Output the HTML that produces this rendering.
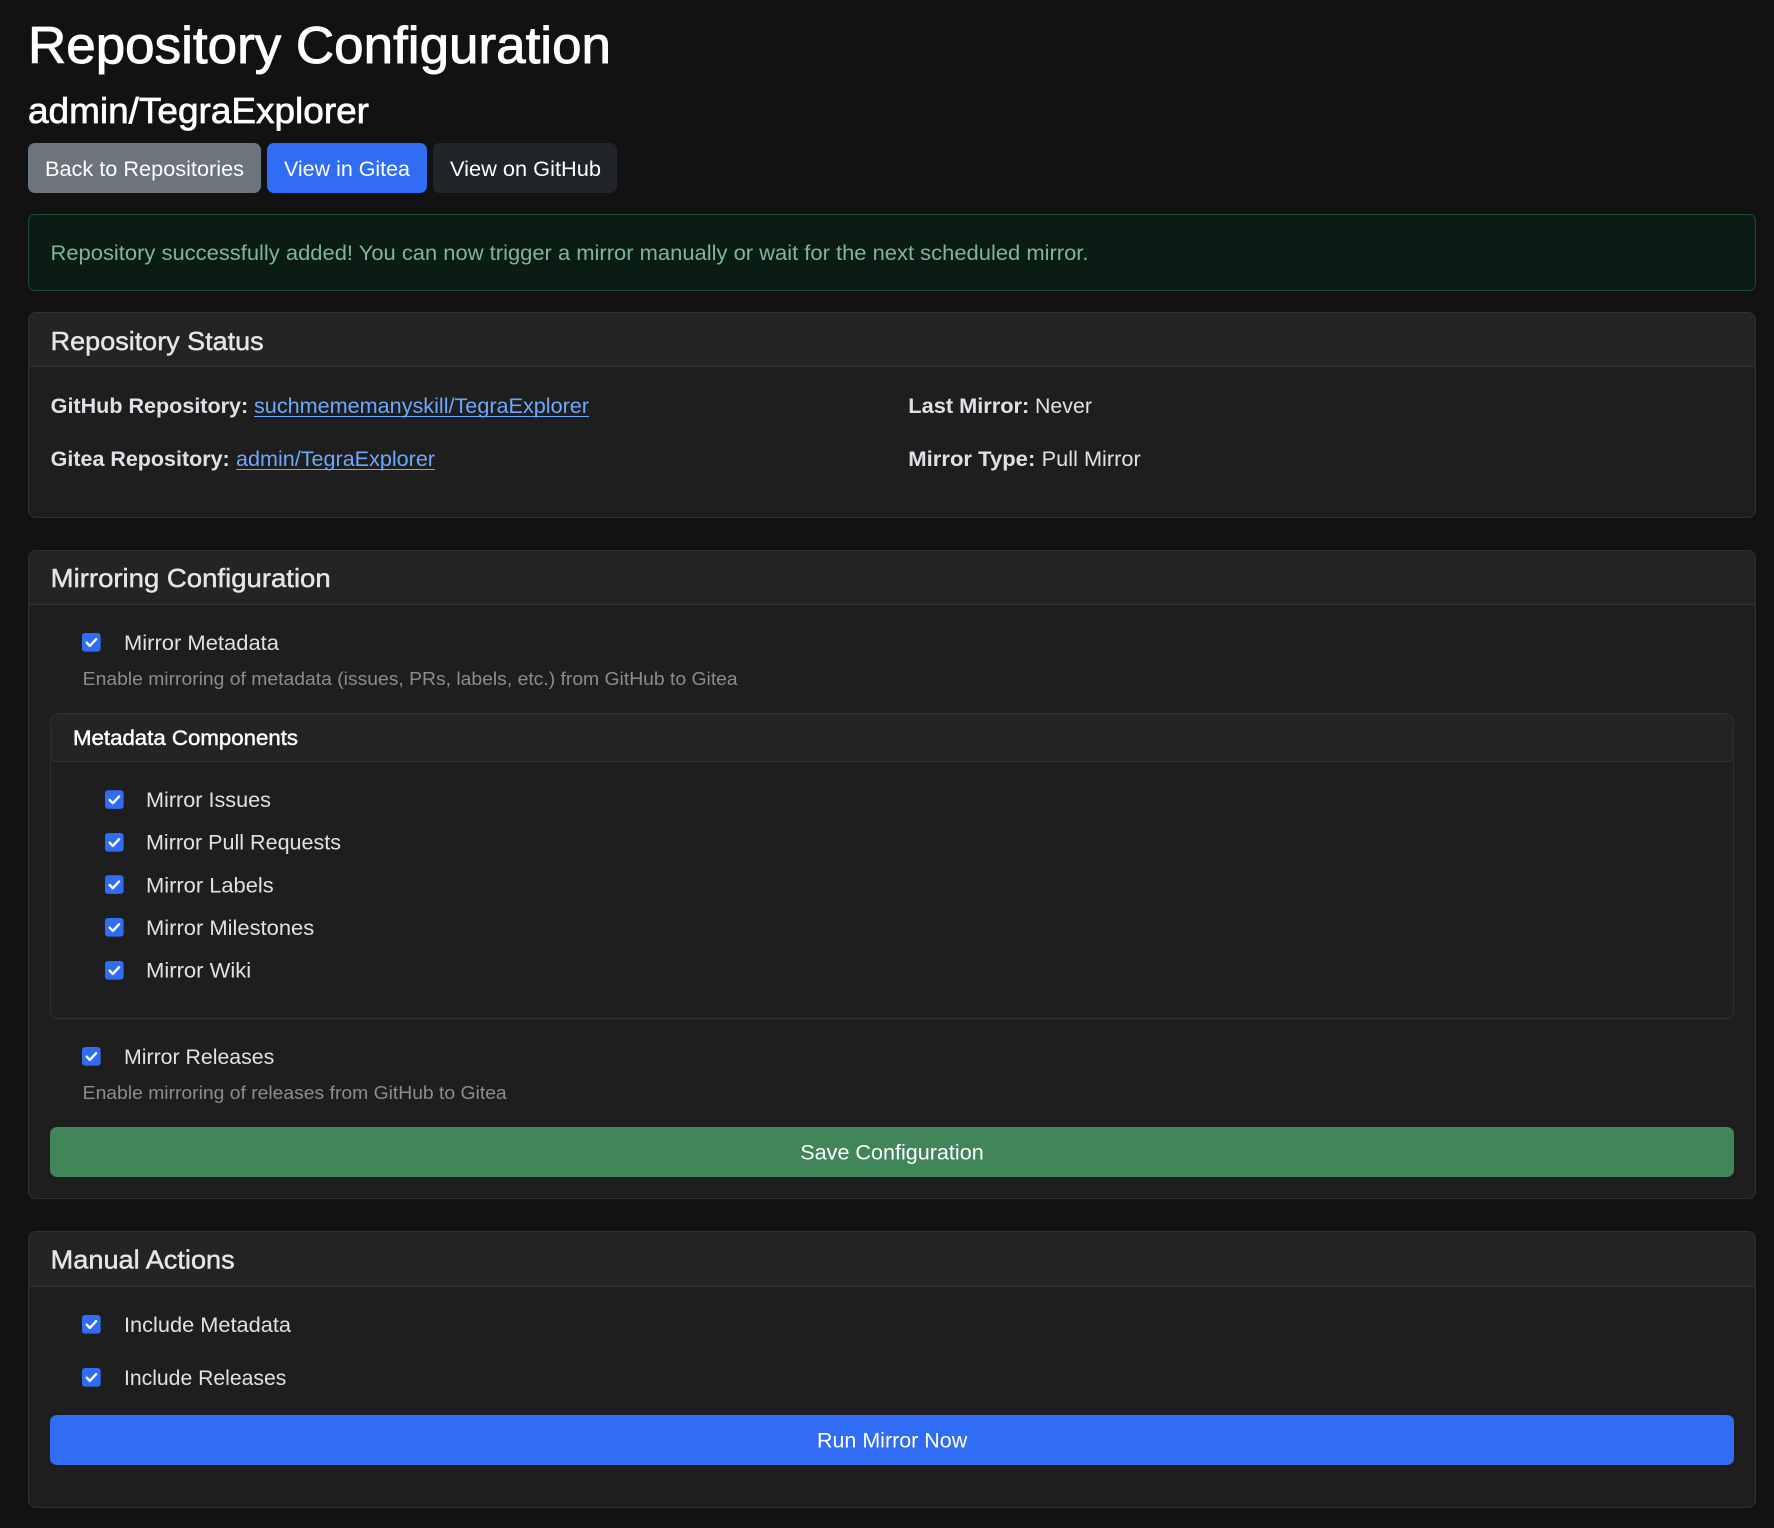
<!DOCTYPE html>
<html lang="en"><head><meta charset="utf-8"><title>Repository Configuration</title>
<style>
html,body{margin:0;padding:0;background:#121212;width:1774px;height:1528px;overflow:hidden}
body{position:relative;font-family:"Liberation Sans",sans-serif}
.b{position:absolute;box-sizing:border-box}
.card{background:#1e1e1e;border:1px solid #2f3133;border-radius:8px;left:28px;width:1728px;overflow:hidden}
.hd{position:absolute;box-sizing:border-box;left:0;top:0;right:0;background:#222524;border-bottom:1px solid #2f3133}
.btn{border-radius:7px;height:50px;top:143px}
svg{position:absolute;left:0;top:0}
text{font-family:"Liberation Sans",sans-serif;font-size:21px;fill:#dee2e6;white-space:pre}
.t{stroke-width:.2px;stroke:#dee2e6}
.m{stroke-width:.45px}
</style></head><body>
<div class="b btn" style="left:28px;width:233px;background:#6c757d"></div>
<div class="b btn" style="left:267px;width:160px;background:#316cf4"></div>
<div class="b btn" style="left:433px;width:184px;background:#212529"></div>
<div class="b" style="left:28px;top:214px;width:1728px;height:77px;background:#0a1c13;border:1px solid #1c4a2e;border-radius:7px"></div>
<div class="b card" style="top:312px;height:206px"><div class="hd" style="height:54px"></div></div>
<div class="b card" style="top:550px;height:649px"><div class="hd" style="height:54px"></div></div>
<div class="b card" style="top:713px;left:50px;width:1684px;height:306px"><div class="hd" style="height:48px"></div></div>
<div class="b" style="left:50px;top:1127px;width:1684px;height:50px;border-radius:7px;background:#41855a"></div>
<div class="b card" style="top:1231px;height:277px"><div class="hd" style="height:55px"></div></div>
<div class="b" style="left:50px;top:1415px;width:1684px;height:50px;border-radius:7px;background:#316cf4"></div>
<div class="b" style="left:254px;top:416px;width:335px;height:1px;background:#6ea8fe"></div>
<div class="b" style="left:236px;top:469px;width:199px;height:1px;background:#6ea8fe"></div>
<svg width="1774" height="1528" viewBox="0 0 1774 1528" xmlns="http://www.w3.org/2000/svg">
<defs><g id="c"><rect width="18.6" height="18.6" rx="3" fill="#316cf4"/><path d="M4.7 9.7l3.1 3.2 6.3-6.7" fill="none" stroke="#fff" stroke-width="2.4" stroke-linecap="round" stroke-linejoin="round"/></g></defs>
<text x="28" y="63" textLength="583" lengthAdjust="spacingAndGlyphs" style="font-size:51.5px;fill:#fff;stroke:#fff;stroke-width:.9px">Repository Configuration</text>
<text x="28" y="123" textLength="341" lengthAdjust="spacingAndGlyphs" style="font-size:36.5px;fill:#fff;stroke:#fff;stroke-width:.7px">admin/TegraExplorer</text>
<text x="45" y="176" textLength="199" lengthAdjust="spacingAndGlyphs" style="fill:#fff">Back to Repositories</text>
<text x="284" y="176" textLength="126" lengthAdjust="spacingAndGlyphs" style="fill:#fff">View in Gitea</text>
<text x="450" y="176" textLength="151" lengthAdjust="spacingAndGlyphs" style="fill:#fff">View on GitHub</text>
<text x="50.5" y="260" textLength="1038" lengthAdjust="spacingAndGlyphs" style="fill:#80b59a">Repository successfully added! You can now trigger a mirror manually or wait for the next scheduled mirror.</text>
<text x="50.7" y="350" textLength="213" lengthAdjust="spacingAndGlyphs" style="font-size:26px;fill:#e6e6e6;stroke:#e6e6e6" class="m">Repository Status</text>
<text x="50.7" y="413" textLength="197.5" lengthAdjust="spacingAndGlyphs" style="font-weight:700">GitHub Repository:</text>
<text x="254" y="413" textLength="335" lengthAdjust="spacingAndGlyphs" style="fill:#6ea8fe">suchmememanyskill/TegraExplorer</text>
<text x="50.7" y="466" textLength="179" lengthAdjust="spacingAndGlyphs" style="font-weight:700">Gitea Repository:</text>
<text x="236" y="466" textLength="199" lengthAdjust="spacingAndGlyphs" style="fill:#6ea8fe">admin/TegraExplorer</text>
<text x="908.3" y="413" textLength="121" lengthAdjust="spacingAndGlyphs" style="font-weight:700">Last Mirror:</text>
<text x="1035" y="413" textLength="57" lengthAdjust="spacingAndGlyphs">Never</text>
<text x="908.3" y="466" textLength="127" lengthAdjust="spacingAndGlyphs" style="font-weight:700">Mirror Type:</text>
<text x="1041.7" y="466" textLength="99" lengthAdjust="spacingAndGlyphs">Pull Mirror</text>
<text x="50.7" y="587" textLength="280" lengthAdjust="spacingAndGlyphs" style="font-size:26px;fill:#e6e6e6;stroke:#e6e6e6" class="m">Mirroring Configuration</text>
<use href="#c" x="82" y="633"/>
<text x="124" y="650" textLength="155" lengthAdjust="spacingAndGlyphs">Mirror Metadata</text>
<text x="82.7" y="685" textLength="655" lengthAdjust="spacingAndGlyphs" style="font-size:18.2px;fill:#8a8d90">Enable mirroring of metadata (issues, PRs, labels, etc.) from GitHub to Gitea</text>
<text x="73" y="745" textLength="225" lengthAdjust="spacingAndGlyphs" style="fill:#fff;stroke:#fff" class="m">Metadata Components</text>
<use href="#c" x="105" y="790.3"/><text x="146" y="807" textLength="125" lengthAdjust="spacingAndGlyphs">Mirror Issues</text>
<use href="#c" x="105" y="833"/><text x="146" y="849.7" textLength="195" lengthAdjust="spacingAndGlyphs">Mirror Pull Requests</text>
<use href="#c" x="105" y="875.3"/><text x="146" y="892.5" textLength="127.7" lengthAdjust="spacingAndGlyphs">Mirror Labels</text>
<use href="#c" x="105" y="918"/><text x="146" y="935" textLength="168.2" lengthAdjust="spacingAndGlyphs">Mirror Milestones</text>
<use href="#c" x="105" y="961"/><text x="146" y="977.7" textLength="105.2" lengthAdjust="spacingAndGlyphs">Mirror Wiki</text>
<use href="#c" x="82" y="1047"/>
<text x="124" y="1064" textLength="150.3" lengthAdjust="spacingAndGlyphs">Mirror Releases</text>
<text x="82.7" y="1099" textLength="424" lengthAdjust="spacingAndGlyphs" style="font-size:18.2px;fill:#8a8d90">Enable mirroring of releases from GitHub to Gitea</text>
<text x="800.3" y="1159.5" textLength="183.4" lengthAdjust="spacingAndGlyphs" style="fill:#fff">Save Configuration</text>
<text x="50.7" y="1268.5" textLength="184" lengthAdjust="spacingAndGlyphs" style="font-size:26px;fill:#e6e6e6;stroke:#e6e6e6" class="m">Manual Actions</text>
<use href="#c" x="82" y="1315"/>
<text x="124" y="1332" textLength="167" lengthAdjust="spacingAndGlyphs">Include Metadata</text>
<use href="#c" x="82" y="1368"/>
<text x="124" y="1385" textLength="162.3" lengthAdjust="spacingAndGlyphs">Include Releases</text>
<text x="817" y="1447.7" textLength="150.2" lengthAdjust="spacingAndGlyphs" style="fill:#fff">Run Mirror Now</text>
</svg>
</body></html>
